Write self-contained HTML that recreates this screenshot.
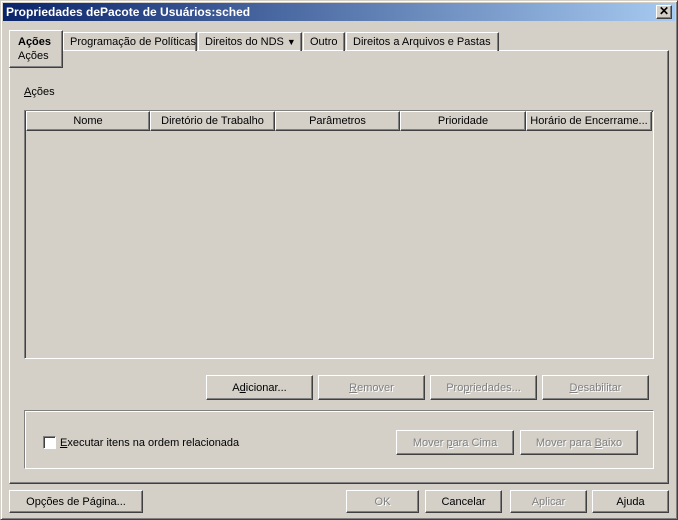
<!DOCTYPE html><html><head><style>
*{margin:0;padding:0;box-sizing:border-box}
body{width:678px;height:520px;background:#d4d0c8;font-family:"Liberation Sans",sans-serif;font-size:11px;color:#000;position:relative;overflow:hidden}
.a{position:absolute}
.win{left:0;top:0;width:678px;height:520px;border:1px solid;border-color:#d4d0c8 #404040 #404040 #d4d0c8;box-shadow:inset 1px 1px #fff,inset -1px -1px #808080}
.title{left:3px;top:3px;width:672px;height:18px;background:linear-gradient(90deg,#0a246a,#a6caf0);color:#fff;font-weight:bold;font-size:12px;line-height:18px;padding-left:3px}
.btn{position:absolute;border:1px solid;border-color:#fff #404040 #404040 #fff;box-shadow:inset -1px -1px #808080;text-align:center;background:#d4d0c8}
.dis{color:#808080;text-shadow:1px 1px #fff}
.tab{position:absolute;top:32px;height:19px;border:1px solid;border-color:#fff #404040 transparent #fff;border-bottom:none;box-shadow:inset -1px 0 #808080;line-height:18px;padding-left:6px}
.hd{position:absolute;top:111px;height:20px;border:1px solid;border-color:#fff #404040 #404040 #fff;box-shadow:inset -1px -1px #808080;text-align:center;line-height:19px}
u{text-decoration:underline}
</style></head><body>
<div class="a win"></div>
<div class="a title">Propriedades dePacote de Usuários:sched</div>
<div class="btn" style="left:656px;top:5px;width:16px;height:14px;font-size:12px;font-weight:bold;line-height:11px">✕</div>
<div class="a" style="left:9px;top:50px;width:660px;height:434px;border:1px solid;border-color:#fff #404040 #404040 #fff;box-shadow:inset -1px -1px #808080"></div>
<div class="tab" style="left:63px;width:134px">Programação de Políticas</div>
<div class="tab" style="left:198px;width:104px">Direitos do NDS <span style="font-size:9px">▼</span></div>
<div class="tab" style="left:303px;width:42px">Outro</div>
<div class="tab" style="left:346px;width:153px">Direitos a Arquivos e Pastas</div>
<div class="a" style="left:9px;top:30px;width:54px;height:38px;border:1px solid;border-color:#fff #404040 #404040 #fff;box-shadow:inset -1px -1px #808080;background:#d4d0c8;padding:4px 0 0 8px;line-height:14px"><b>Ações</b><br>Ações</div>
<div class="a" style="left:24px;top:86px"><u>A</u>ções</div>
<div class="a" style="left:24px;top:110px;width:630px;height:249px;border:1px solid;border-color:#808080 #fff #fff #808080;box-shadow:inset 1px 1px #404040"></div>
<div class="hd" style="left:26px;width:124px">Nome</div>
<div class="hd" style="left:150px;width:125px">Diretório de Trabalho</div>
<div class="hd" style="left:275px;width:125px">Parâmetros</div>
<div class="hd" style="left:400px;width:126px">Prioridade</div>
<div class="hd" style="left:526px;width:126px">Horário de Encerrame...</div>
<div class="btn" style="left:206px;top:375px;width:107px;height:25px;line-height:24px">A<u>d</u>icionar...</div>
<div class="btn dis" style="left:318px;top:375px;width:107px;height:25px;line-height:24px"><u>R</u>emover</div>
<div class="btn dis" style="left:430px;top:375px;width:107px;height:25px;line-height:24px">Pro<u>p</u>riedades...</div>
<div class="btn dis" style="left:542px;top:375px;width:107px;height:25px;line-height:24px"><u>D</u>esabilitar</div>
<div class="a" style="left:24px;top:410px;width:630px;height:59px;border:1px solid;border-color:#808080 #fff #fff #808080;box-shadow:inset 1px 1px #fff,1px 1px #808080 inset"></div>
<div class="a" style="left:43px;top:436px;width:13px;height:13px;background:#fff;border:1px solid;border-color:#808080 #fff #fff #808080;box-shadow:inset 1px 1px #404040"></div>
<div class="a" style="left:60px;top:437px"><u>E</u>xecutar itens na ordem relacionada</div>
<div class="btn dis" style="left:396px;top:430px;width:118px;height:25px;line-height:24px">Mover <u>p</u>ara Cima</div>
<div class="btn dis" style="left:520px;top:430px;width:118px;height:25px;line-height:24px">Mover para <u>B</u>aixo</div>
<div class="btn" style="left:9px;top:490px;width:134px;height:23px;line-height:22px">Opções de Pá<u>g</u>ina...</div>
<div class="btn dis" style="left:346px;top:490px;width:73px;height:23px;line-height:22px">OK</div>
<div class="btn" style="left:425px;top:490px;width:77px;height:23px;line-height:22px">Cancelar</div>
<div class="btn dis" style="left:510px;top:490px;width:77px;height:23px;line-height:22px">Aplicar</div>
<div class="btn" style="left:592px;top:490px;width:77px;height:23px;line-height:22px">A<u>j</u>uda</div>
</body></html>
